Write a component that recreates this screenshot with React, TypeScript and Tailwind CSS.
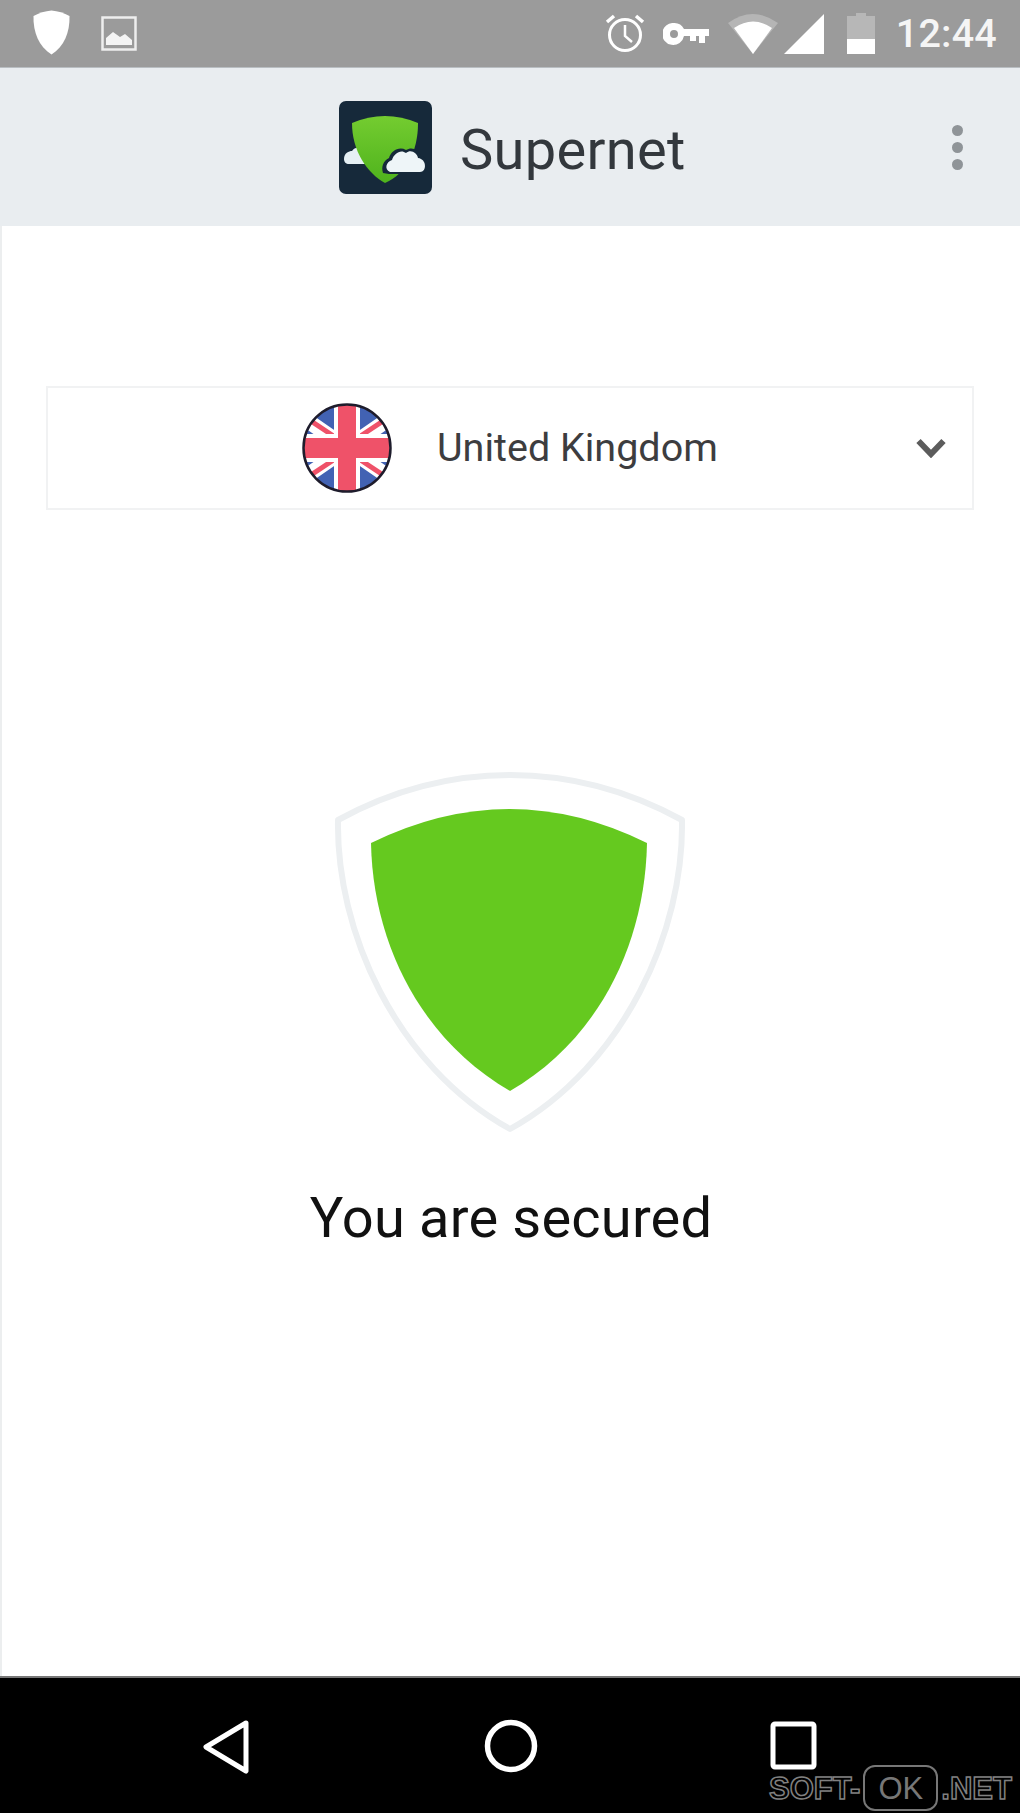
export default function App() {
  return (
    <div className="relative flex h-[1813px] w-[1020px] flex-col overflow-hidden bg-white font-['Roboto',sans-serif]">
      {/* Status bar */}
      <div className="flex h-[67px] items-center bg-[#9b9b9b] pl-[33px] pr-[23px] text-white">
        <svg width="37" height="45" viewBox="0 0 37 45" className="-mt-[2px]">
          <path d="M18.5 0.5C25 1 31 3 36.5 6C37 22 31 37 18.5 44.5C6 37 0 22 0.5 6C6 3 12 1 18.5 0.5Z" fill="#fff" />
        </svg>
        <svg width="36" height="35" viewBox="0 0 36 35" className="ml-[31px]">
          <rect x="1.5" y="1.5" width="33" height="32" fill="none" stroke="#eee" strokeWidth="2.5" />
          <path d="M5 29V22L12 16L19 21L24 18L31 24V29Z" fill="#f4f4f4" />
        </svg>
        <svg width="40" height="41" viewBox="0 0 40 41" className="ml-auto" fill="none" stroke="#fff">
          <circle cx="20" cy="22" r="15.5" strokeWidth="3" />
          <path d="M20 12V23L27 29" strokeWidth="2.5" />
          <path d="M2 9L9 3M38 9L31 3" strokeWidth="3.5" />
        </svg>
        <svg width="46" height="22" viewBox="0 0 46 22" className="ml-[18px]" fill="#fff">
          <path fillRule="evenodd" d="M11 0A11 11 0 0 1 21 6H46V13H42V20H36V13H33V18H27V13H21A11 11 0 1 1 11 0ZM11 7A4 4 0 1 0 11 15A4 4 0 1 0 11 7Z" />
        </svg>
        <svg width="50" height="40" viewBox="0 0 50 40" className="ml-[19px]">
          <path d="M0 9Q25 -9 50 9L25 40Z" fill="#b5b5b5" />
          <path d="M6 14Q25 1 44 14L25 40Z" fill="#fff" />
        </svg>
        <svg width="40" height="40" viewBox="0 0 40 40" className="ml-[6px]">
          <path d="M40 0V40H0Z" fill="#fff" />
        </svg>
        <svg width="28" height="41" viewBox="0 0 28 41" className="ml-[23px]">
          <path d="M9 0H19V3H28V26H0V3H9Z" fill="#b7b7b7" />
          <rect x="0" y="26" width="28" height="15" fill="#fff" />
        </svg>
        <span className="ml-[21px] text-[39.5px] font-medium leading-none tracking-[0.2px] text-[#f5f5f5]">12:44</span>
      </div>

      {/* Header */}
      <div className="flex h-[159px] items-center border-t border-[#b9bec2] bg-[#e9edf0] pl-[339px] pr-[57px]">
        <svg width="93" height="93" viewBox="0 0 93 93">
          <defs>
            <linearGradient id="logoGreen" x1="0" y1="0" x2="0" y2="1">
              <stop offset="0" stopColor="#74cc30" />
              <stop offset="1" stopColor="#4fb31d" />
            </linearGradient>
          </defs>
          <rect width="93" height="93" rx="7" fill="#16293a" />
          <path d="M5 58C5 52 10 50 13 50C16 46 20 46 23 49L30 63H10C7 63 5 61 5 58Z" fill="#e6f0f4" />
          <path d="M13 22Q46 8 79 22C79 50 68 72 46 82C28 72 13 50 13 22Z" fill="url(#logoGreen)" />
          <path d="M44 72C42 66 44 60 50 57C52 50 60 45 67 49C73 45 80 49 82 55C91 57 91 72 82 73H50Z" fill="#16293a" />
          <path d="M51 71C45 68 47 61 53 59C55 52 62 48 67 52C72 48 78 52 79 57C88 58 88 71 81 71Z" fill="#eef5f8" />
        </svg>
        <span className="ml-[28px] mt-[5px] text-[56px] leading-none tracking-[0.3px] text-[#33383d]">Supernet</span>
        <div className="ml-auto flex flex-col gap-[6px]">
          <div className="h-[11px] w-[11px] rounded-full bg-[#8f9498]" />
          <div className="h-[11px] w-[11px] rounded-full bg-[#8f9498]" />
          <div className="h-[11px] w-[11px] rounded-full bg-[#8f9498]" />
        </div>
      </div>

      {/* Main */}
      <div className="flex flex-1 flex-col border-l-2 border-[#eceeef]">
        <div className="ml-[44px] mt-[160px] flex h-[124px] w-[928px] items-center border-2 border-[#f1f2f3] pl-[254px] pr-[26px]">
          <svg width="90" height="90" viewBox="0 0 90 90">
            <defs>
              <clipPath id="flagClip">
                <circle cx="45" cy="45" r="43.5" />
              </clipPath>
            </defs>
            <g clipPath="url(#flagClip)">
              <rect width="90" height="90" fill="#4262b3" />
              <path d="M0 14L90 76M90 14L0 76" stroke="#fff" strokeWidth="15" />
              <path d="M0 12L36 36M90 12L54 36M0 78L36 54M90 78L54 54" stroke="#ef5269" strokeWidth="5" />
              <rect x="32" y="0" width="26" height="90" fill="#fff" />
              <rect x="0" y="31" width="90" height="28" fill="#fff" />
              <rect x="36" y="0" width="18" height="90" fill="#ef5269" />
              <rect x="0" y="35" width="90" height="20" fill="#ef5269" />
            </g>
            <circle cx="45" cy="45" r="43.5" fill="none" stroke="#1e1c2c" strokeWidth="2.5" />
          </svg>
          <span className="ml-[45px] text-[39.5px] leading-none text-[#3d3d3f]">United Kingdom</span>
          <svg width="30" height="20" viewBox="0 0 30 20" className="ml-auto" fill="none" stroke="#5c5c5c" strokeWidth="6">
            <path d="M2.5 3L15 16L27.5 3" />
          </svg>
        </div>

        <svg width="360" height="372" viewBox="330 766 360 372" className="ml-[328px] mt-[256px]">
          <path d="M510 775Q600 775 682 820C684 930 625 1065 510 1129C395 1065 336 930 338 820Q420 775 510 775Z" fill="none" stroke="#eceff1" strokeWidth="6" strokeLinejoin="round" />
          <path d="M371 843Q510 775 647 843C645 945 598 1040 510 1091C422 1040 373 945 371 843Z" fill="#65c91f" />
        </svg>

        <div className="mt-[45px] text-center text-[56px] leading-[70px] tracking-[0.2px] text-[#111]">You are secured</div>
      </div>

      {/* Nav bar */}
      <div className="flex h-[137px] items-start border-t-2 border-[#777] bg-black pt-[41px]">
        <svg width="48" height="56" viewBox="0 0 48 56" className="ml-[202px] fill-none stroke-white">
          <path d="M44 4L4 28L44 52Z" strokeWidth="5" strokeLinejoin="round" />
        </svg>
        <svg width="54" height="54" viewBox="0 0 54 54" className="ml-[234px] fill-none stroke-white">
          <circle cx="27" cy="27" r="23.5" strokeWidth="5.5" />
        </svg>
        <svg width="47" height="49" viewBox="0 0 47 49" className="ml-[232px] mt-[2px] fill-none stroke-white">
          <rect x="3" y="3" width="41" height="43" rx="2" strokeWidth="5" />
        </svg>
      </div>

      {/* Watermark */}
      <div className="absolute bottom-[2px] left-[769px] flex h-[46px] items-center font-['Liberation_Sans',sans-serif] text-[31px] font-bold leading-none text-transparent [-webkit-text-stroke:1.5px_#808080]">
        <span>SOFT-</span>
        <span className="mx-[3px] flex h-[46px] w-[75px] items-center justify-center rounded-[12px] border-2 border-[#777] font-normal text-[#777] [-webkit-text-stroke:0]">OK</span>
        <span>.NET</span>
      </div>
    </div>
  );
}
